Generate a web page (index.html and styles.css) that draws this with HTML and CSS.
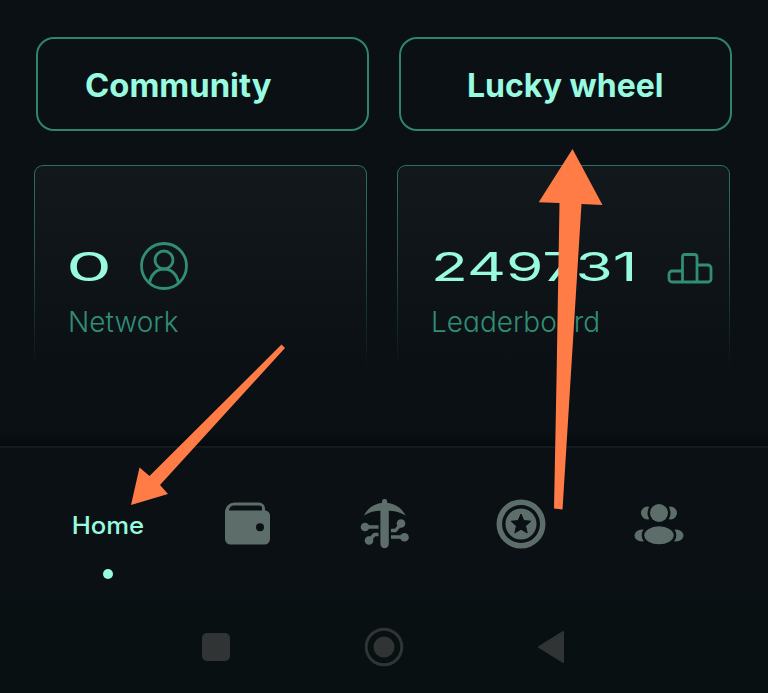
FILE: index.html
```html
<!DOCTYPE html>
<html lang="en">
<head>
<meta charset="utf-8">
<title>Home</title>
<link rel="stylesheet" href="styles.css">
</head>
<body>
<div class="screen">
  <main class="content">
    <div class="actions">
      <button class="action"><span class="community">Community</span></button>
      <button class="action"><span class="lucky">Lucky wheel</span></button>
    </div>
    <div class="cards">
      <section class="card">
        <div class="figure">
          <span class="number number-single">0</span>
          <svg class="user-icon" width="48" height="48" viewBox="0 0 48 48"><circle cx="24" cy="24" r="22.5"/><circle cx="24" cy="18" r="9"/><path d="M9.500 41C11 32 17 27 24 27S37 32 38.500 41"/></svg>
        </div>
        <div class="label"><span class="network">Network</span></div>
      </section>
      <section class="card">
        <div class="figure">
          <span class="number number-long">249731</span>
          <svg class="rank-icon" width="46" height="31" viewBox="0 0 46 31"><path d="M15.500 18H5a3 3 0 0 0-3 3v5a3 3 0 0 0 3 3h36a3 3 0 0 0 3-3V15a3 3 0 0 0-3-3H30M15.500 29V4a2.500 2.500 0 0 1 2.500-2.500h9.500A2.500 2.500 0 0 1 30 4v25"/></svg>
        </div>
        <div class="label"><span class="leaderboard">Leaderboard</span></div>
      </section>
    </div>
  </main>
  <nav class="tabs">
    <div class="tab current"><span class="home">Home</span><i class="dot"></i></div>
    <div class="tab wallet"><svg width="50" height="50" viewBox="0 0 50 50"><path fill-rule="evenodd" d="M10.500 3.500H35a6 6 0 0 1 6 6v2a5 5 0 0 1 5 5V40a5.500 5.500 0 0 1-5.500 5.500h-34A5.500 5.500 0 0 1 1 40V13a9.500 9.500 0 0 1 9.500-9.500zM10 6.500a5 5 0 0 0-5 5h33V9a2.500 2.500 0 0 0-2.500-2.500zM36 24.300a4 4 0 1 0 0 8 4 4 0 0 0 0-8z"/></svg></div>
    <div class="tab mine"><svg width="50" height="50" viewBox="0 0 50 50"><path d="M22 2.500a2.600 2.600 0 0 1 5.200 0v1.300C36 5 42 9.500 45.500 16.500 39.500 13 34 12 28.800 11.800V45a4.200 4.200 0 0 1-8.400 0V11.800C15 12 9.500 13 4 16.500 7.500 9.500 13.500 5 22 3.800z"/><g class="trace"><path d="M5 28h13.500M9.500 41l5-5.500h4M31 31.500h4.500l5-6M31 38h13"/></g><circle cx="5" cy="28" r="4.300"/><circle cx="9" cy="41.500" r="4.300"/><circle cx="41" cy="24.500" r="4.300"/><circle cx="44.500" cy="38.300" r="4.300"/></svg></div>
    <div class="tab"><svg width="50" height="50" viewBox="0 0 50 50"><circle cx="25" cy="25" r="24.500"/><circle class="cut" cx="25" cy="25" r="19"/><circle cx="25" cy="25" r="15.500"/><path class="cut star" d="M25 15l2.800 6.600 7.100.6-5.400 4.700 1.700 7-6.200-3.700-6.200 3.700 1.700-7-5.400-4.700 7.100-.6z"/></svg></div>
    <div class="tab"><svg width="50" height="50" viewBox="0 0 50 50"><ellipse cx="13.500" cy="14" rx="6.500" ry="6.500"/><ellipse cx="36.500" cy="14" rx="6.500" ry="6.500"/><ellipse cx="8" cy="36.500" rx="7.500" ry="6"/><ellipse cx="42" cy="36.500" rx="7.500" ry="6"/><circle class="cut" cx="25" cy="14" r="11.500"/><ellipse class="cut" cx="25" cy="36.300" rx="17.300" ry="12"/><circle cx="25" cy="14" r="9"/><ellipse cx="25" cy="36.300" rx="14.700" ry="9"/></svg></div>
  </nav>
  <footer class="system">
    <svg width="40" height="40" viewBox="0 0 40 40"><rect x="6" y="6" width="28" height="28" rx="5"/></svg>
    <svg width="40" height="40" viewBox="0 0 40 40"><circle class="ring" cx="20" cy="20" r="17.800"/><circle cx="20" cy="20" r="10.500"/></svg>
    <svg width="40" height="40" viewBox="0 0 40 40"><path class="back" d="M8 20L32 5v30z"/></svg>
  </footer>
  <svg class="arrows" width="768" height="693" viewBox="0 0 768 693"><path d="M131 505L139.500 467.500 149.500 476 281.500 344.500 285 348 160 485 168 494z"/><path d="M572.500 149L602.500 205 581.500 204 562.500 509.500 554 508.500 556.500 380 559.500 203 538.700 202.300z"/></svg>
</div>
</body>
</html>
```

FILE: styles.css
```css
* { box-sizing: border-box; }
body { margin: 0; background: #0a1014; }
.screen {
  position: relative;
  width: 768px;
  height: 693px;
  overflow: hidden;
  display: flex;
  flex-direction: column;
  background: #0a1014;
  color: #98fbe0;
  font-family: Inter, "Open Sans", sans-serif;
  font-feature-settings: "cv11";
}
.content {
  height: 446px;
  padding: 37px 36px 0 34px;
  background: linear-gradient(#0a1014 0 432px, #060a0d 445px);
}
.actions {
  display: grid;
  grid-template-columns: 333px 333px;
  gap: 30px;
  padding-left: 2px;
}
.action {
  height: 94px;
  padding: 3px 0 0;
  display: flex;
  align-items: center;
  border: 2px solid #318371;
  border-radius: 18px;
  background: #0a1014;
  color: inherit;
  font: 650 32px/40px Inter, "Open Sans", sans-serif;
}
.action span, .label span, .number, .home { display: inline-block; white-space: nowrap; transform-origin: left center; }
.community { margin-left: 47px; transform: scaleX(1.025); }
.lucky { margin-left: 66px; }
.cards {
  display: grid;
  grid-template-columns: 333px 333px;
  gap: 30px;
  margin-top: 34px;
}
.card {
  height: 205px;
  padding: 76px 0 0 35px;
  border: 1px solid transparent;
  border-radius: 9px 9px 0 0;
  background: linear-gradient(#12181b, #0a1014) padding-box, linear-gradient(#2b7262, #24594f 40%, #0a1014) border-box;
}
.figure { height: 48px; display: flex; align-items: center; }
.figure svg { fill: none; stroke: #318d76; stroke-width: 2.800; flex: none; }
.number { font-size: 39px; line-height: 48px; font-weight: 400; margin-left: -2px; }
.number-single { width: 72px; transform: translate(-2px, 1px) scaleX(1.87); }
.number-long { width: 235.500px; transform: translateY(1px) scaleX(1.55); }
.rank-icon { margin-top: 4px; }
.label { color: #318d76; font-size: 28px; line-height: 36px; font-weight: 300; margin: 14px 0 0 -2px; }
.tabs {
  height: 154px;
  padding: 51px 40px 0 39px;
  display: grid;
  grid-template-columns: repeat(5, 137.700px);
  border-top: 2px solid #141b1e;
  background: #0a1014;
}
.tab { display: flex; flex-direction: column; align-items: center; }
.tab svg { fill: #5d6d69; }
.wallet { padding-left: 6px; }
.mine { padding-left: 3px; }
.tab .cut { fill: #0a1014; }
.star { stroke: #0a1014; stroke-width: 1; stroke-linejoin: round; }
.trace { fill: none; stroke: #5d6d69; stroke-width: 3.500; stroke-linejoin: round; }
.home { font-size: 24px; line-height: 30px; font-weight: 500; margin-top: 12px; transform: scaleX(1.07); transform-origin: center; }
.dot { width: 10px; height: 10px; border-radius: 50%; background: #98fbe0; margin-top: 28px; }
.system {
  height: 93px;
  padding: 0 197px 0 196px;
  display: flex;
  justify-content: space-between;
  align-items: center;
  background: #081012;
}
.system svg { fill: #303435; }
.system .ring { fill: none; stroke: #303435; stroke-width: 3; }
.back { stroke: #303435; stroke-width: 2; stroke-linejoin: round; }
.arrows { position: absolute; left: 0; top: 0; fill: #ff7c47; pointer-events: none; }
```
